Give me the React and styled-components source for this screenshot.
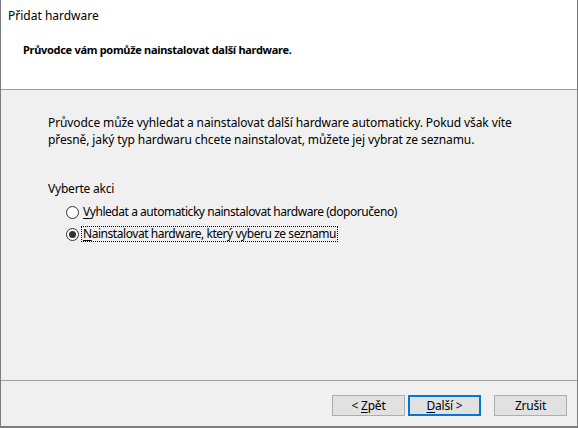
import React, { useState } from 'react'
import styled, { createGlobalStyle } from 'styled-components'

const GlobalStyle = createGlobalStyle`
  html, body {
    margin: 0;
    padding: 0;
    background: #f0f0f0;
  }
  * { box-sizing: border-box; }
`;

const Window = styled.div`
  width: 578px;
  height: 428px;
  display: flex;
  flex-direction: column;
  background: #f0f0f0;
  border: 1px solid #7d7d7d;
  border-top: none;
  border-bottom-width: 2px;
  font-family: "Segoe UI", "Noto Sans", sans-serif;
  font-size: 12px;
  color: #000;
`;

const Header = styled.div`
  height: 90px;
  background: #fff;
  border-bottom: 1px solid #a0a0a0;
  display: flex;
  flex-direction: column;
`;

const Caption = styled.div`
  height: 33px;
  padding: 8px 0 0 7px;
  line-height: 16px;
`;

const HeaderTitle = styled.div`
  padding-left: 22px;
  margin-top: 9px;
  font-weight: bold;
  font-size: 11px;
  letter-spacing: -0.3px;
  line-height: 16px;
`;

const Body = styled.div`
  flex: 1;
  padding: 24px 0 0 47px;
  display: flex;
  flex-direction: column;
`;

const Intro = styled.p`
  margin: 0;
  line-height: 17px;
  width: 490px;
  letter-spacing: -0.1px;
`;

const GroupLabel = styled.div`
  margin-top: 32px;
  line-height: 17px;
  letter-spacing: -0.2px;
`;

const Options = styled.div`
  margin-top: 7px;
  padding-left: 18px;
  display: flex;
  flex-direction: column;
  gap: 6px;
`;

const OptionRow = styled.label`
  display: flex;
  align-items: center;
  gap: 3px;
  height: 16px;
  cursor: default;
`;

const RadioCircle = styled.span`
  width: 13px;
  height: 13px;
  border-radius: 50%;
  border: 1px solid #333;
  background: #fff;
  display: flex;
  align-items: center;
  justify-content: center;
  flex-shrink: 0;

  &::after {
    content: '';
    width: 7px;
    height: 7px;
    border-radius: 50%;
    background: ${p => (p.$checked ? '#333' : 'transparent')};
  }
`;

const OptionText = styled.span`
  line-height: 14px;
  padding: 0 1px;
  letter-spacing: -0.45px;
  outline: ${p => (p.$focused ? '1px dotted #000' : 'none')};
  outline-offset: 0;
`;

const Key = styled.u`
  text-decoration-thickness: 1px;
  text-underline-offset: 2px;
`;

const Footer = styled.div`
  height: 46px;
  border-top: 1px solid #a0a0a0;
  display: flex;
  justify-content: flex-end;
  align-items: flex-start;
  padding: 14px 10px 0 0;
`;

const Button = styled.button`
  width: 73px;
  height: 21px;
  margin-left: ${p => p.$gap || 0}px;
  background: #e1e1e1;
  border: ${p => (p.$default ? '2px solid #0078d7' : '1px solid #adadad')};
  font-family: inherit;
  font-size: 12px;
  letter-spacing: -0.2px;
  color: #000;
  padding: 0;
  line-height: 1;
`;

const options = [
  { key: 'V', rest: 'yhledat a automaticky nainstalovat hardware (doporučeno)' },
  { key: 'N', rest: 'ainstalovat hardware, který vyberu ze seznamu' },
];

export default function App() {
  const [selected, setSelected] = useState(1);

  return (
    <>
      <GlobalStyle />
      <Window>
        <Header>
          <Caption>Přidat hardware</Caption>
          <HeaderTitle>Průvodce vám pomůže nainstalovat další hardware.</HeaderTitle>
        </Header>
        <Body>
          <Intro>
            Průvodce může vyhledat a nainstalovat další hardware automaticky. Pokud však víte
            přesně, jaký typ hardwaru chcete nainstalovat, můžete jej vybrat ze seznamu.
          </Intro>
          <GroupLabel>Vyberte akci</GroupLabel>
          <Options>
            {options.map((o, i) => (
              <OptionRow key={o.key} onClick={() => setSelected(i)}>
                <RadioCircle $checked={selected === i} />
                <OptionText $focused={selected === i}>
                  <Key>{o.key}</Key>{o.rest}
                </OptionText>
              </OptionRow>
            ))}
          </Options>
        </Body>
        <Footer>
          <Button>&lt; <Key>Z</Key>pět</Button>
          <Button $default $gap={3}><Key>D</Key>alší &gt;</Button>
          <Button $gap={13}>Zrušit</Button>
        </Footer>
      </Window>
    </>
  );
}
